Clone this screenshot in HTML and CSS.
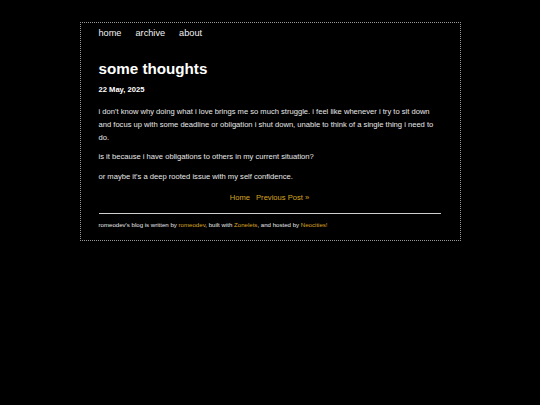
FILE: index.html
```
<!DOCTYPE html>
<html lang="en">
<head>
<meta charset="utf-8">
<title>some thoughts</title>
<link rel="stylesheet" href="styles.css">
</head>
<body>
<div class="page">
  <nav class="topnav">
    <a href="#">home</a>
    <a href="#">archive</a>
    <a href="#">about</a>
  </nav>
  <h1 class="title">some thoughts</h1>
  <p class="date">22 May, 2025</p>
  <p class="text">i don't know why doing what i love brings me so much struggle. i feel like whenever i try to sit down and focus up with some deadline or obligation i shut down, unable to think of a single thing i need to do.</p>
  <p class="text">is it because i have obligations to others in my current situation?</p>
  <p class="text">or maybe it's a deep rooted issue with my self confidence.</p>
  <div class="postnav">
    <a href="#">Home</a>
    <a href="#">Previous Post »</a>
  </div>
  <footer class="footer">romeodev's blog is written by <a href="#">romeodev</a>, built with <a href="#">Zonelets</a>, and hosted by <a href="#">Neocities!</a></footer>
</div>
</body>
</html>
```
FILE: styles.css
```
html, body {
  margin: 0;
  padding: 0;
  background: #000;
}
body {
  font-family: "Liberation Sans", Arial, sans-serif;
  color: #e8e8e8;
}
a {
  text-decoration: none;
}
.page {
  box-sizing: border-box;
  width: 381px;
  margin: 22px auto 0;
  border: 1px dotted #9a9a9a;
  padding: 5px 19px 11px 18px;
}
.topnav {
  display: flex;
  gap: 14px;
  font-size: 9.2px;
  line-height: 11px;
}
.topnav a {
  color: #f2f2f2;
}
.title {
  margin: 21px 0 0;
  font-size: 15.2px;
  line-height: 18px;
  font-weight: bold;
  color: #fff;
}
.date {
  margin: 7px 0 0;
  font-size: 7.6px;
  line-height: 10px;
  font-weight: bold;
  color: #fff;
}
.text {
  margin: 9.5px 0 0;
  font-size: 7.6px;
  line-height: 13px;
}
.text + .text {
  margin-top: 6.5px;
}
.postnav {
  margin-top: 9px;
  display: flex;
  justify-content: center;
  gap: 6px;
  font-size: 7.6px;
  line-height: 11px;
  padding-bottom: 10px;
  border-bottom: 1px solid #cfcfcf;
}
.postnav a {
  color: #d9a520;
}
.footer {
  margin-top: 7px;
  font-size: 6.1px;
  line-height: 8px;
  color: #e6e6e6;
}
.footer a {
  color: #d9a520;
}
```
